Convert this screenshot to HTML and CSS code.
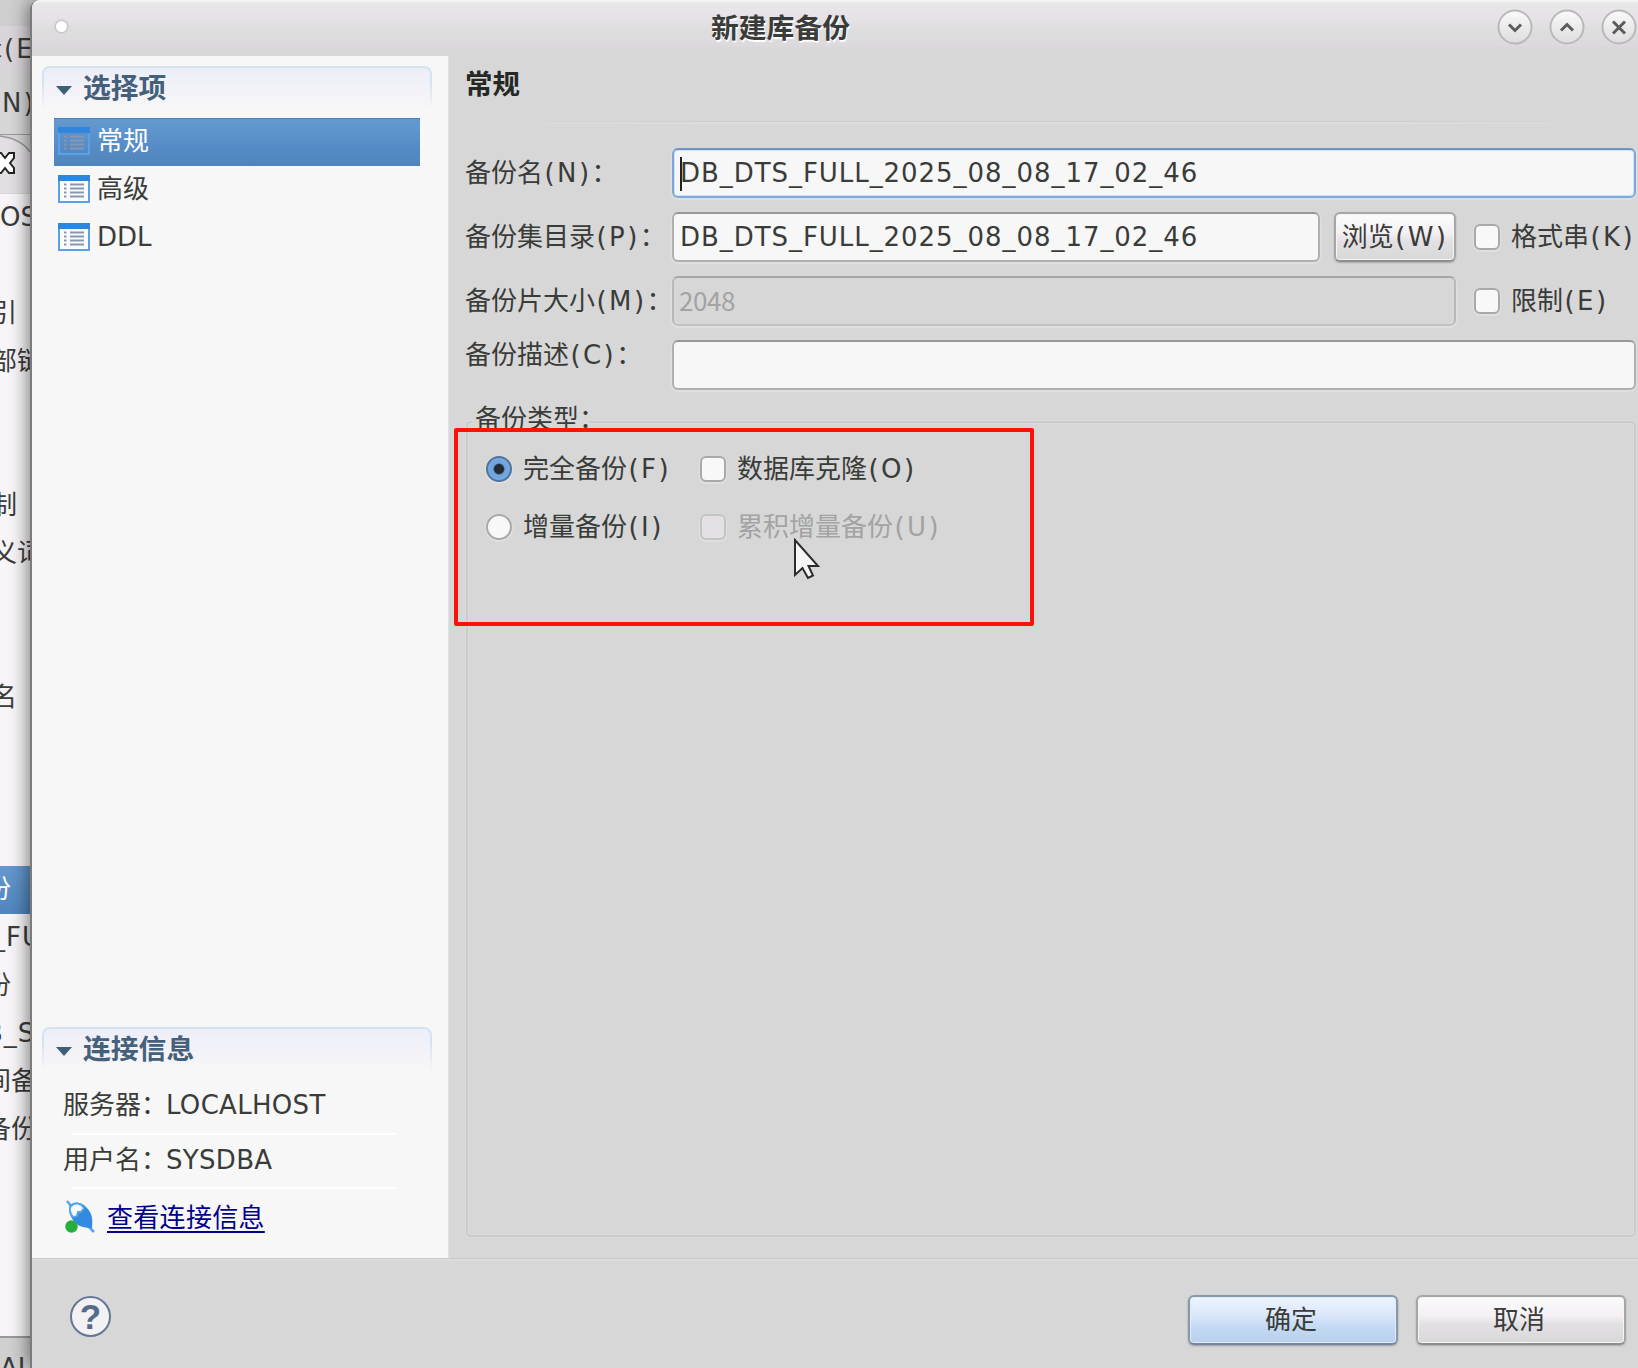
FILE: index.html
```html
<!DOCTYPE html>
<html lang="zh-CN">
<head>
<meta charset="utf-8">
<title>新建库备份</title>
<link rel="stylesheet" href="styles.css">
</head>
<body>
<div class="screen">
  <aside class="backdrop">
    <div class="bd-title"></div>
    <div class="bd-menu"><span class="m-edit">辑(E)</span></div>
    <div class="bd-tools"><span class="m-nav">N)</span></div>
    <div class="bd-tab">
      <svg width="30" height="58" viewBox="0 0 30 58"><path d="M0 1C14 3 24 8 30 17V58H0Z" fill="#e2dfe2"/><path d="M0 1C14 3 24 8 30 17" fill="none" stroke="#999" stroke-width="1.5"/><path d="M-4 18H1L5 23L9 18H14V23L10 28L14 33V38H9L5 33L1 38H-4" fill="#fff" stroke="#222" stroke-width="2"/></svg>
    </div>
    <div class="bd-list">
      <div class="bd-row"><span class="c0">OS</span></div>
      <div class="bd-row"></div>
      <div class="bd-row"><span class="c1">引</span></div>
      <div class="bd-row"><span class="c1">部链</span></div>
      <div class="bd-row"></div>
      <div class="bd-row"></div>
      <div class="bd-row"><span class="c1">制</span></div>
      <div class="bd-row"><span class="c1">义词</span></div>
      <div class="bd-row"></div>
      <div class="bd-row"></div>
      <div class="bd-row"><span class="c1">名</span></div>
      <div class="bd-row"></div>
      <div class="bd-row"></div>
      <div class="bd-row"></div>
      <div class="bd-row on"><span class="c2">份</span></div>
      <div class="bd-row"><span class="c3">_FU</span></div>
      <div class="bd-row"><span class="c2">份</span></div>
      <div class="bd-row"><span class="c4">B_S</span></div>
      <div class="bd-row"><span class="c2">间备</span></div>
      <div class="bd-row"><span class="c2">备份</span></div>
    </div>
    <div class="bd-status">AL</div>
  </aside>

  <main class="dialog">
    <header class="titlebar">
      <i class="dot"></i>
      <h1>新建库备份</h1>
      <div class="winbtns">
        <svg viewBox="0 0 36 36"><use href="#disc"/><path d="M12 15.5L18 21.5L24 15.5"/></svg>
        <svg viewBox="0 0 36 36"><use href="#disc"/><path d="M12 21.5L18 15.5L24 21.5"/></svg>
        <svg viewBox="0 0 36 36"><use href="#disc"/><path d="M12 12.5L24 24.5M24 12.5L12 24.5"/></svg>
      </div>
    </header>

    <div class="body">
      <nav class="sidebar">
        <h2 class="sec"><i class="tri"></i>选择项</h2>
        <ul class="items">
          <li class="on"><svg class="page" viewBox="0 0 32 28"><use href="#page"/></svg>常规</li>
          <li><svg class="page" viewBox="0 0 32 28"><rect width="32" height="28" fill="#fbfbfb"/><use href="#page"/></svg>高级</li>
          <li><svg class="page" viewBox="0 0 32 28"><rect width="32" height="28" fill="#fbfbfb"/><use href="#page"/></svg>DDL</li>
        </ul>
        <h2 class="sec conn"><i class="tri"></i>连接信息</h2>
        <div class="info"><span>服务器：</span><span class="host">LOCALHOST</span></div>
        <div class="info"><span>用户名：</span><span class="user">SYSDBA</span></div>
        <div class="link">
          <svg width="32" height="34" viewBox="0 0 32 34"><path d="M3 2L7 7M25 28L30 33" stroke="#55a5ee" stroke-width="2.5"/><path d="M6 6C12 1 19 4 23 9C28 14 29 20 28 29C19 29 13 27 9 21C5 15 4 10 6 6Z" fill="#328be0"/><path d="M7 7C11 3 17 4 20 9L17 13L14 13L13 17L9 18C6 14 5 10 7 7Z" fill="#f4faff" stroke="#55a5ee" stroke-width="1.8"/><circle cx="7.500" cy="27.500" r="6.200" fill="#27ae3b"/></svg>
          <a>查看连接信息</a>
        </div>
      </nav>

      <section class="content">
        <h3>常规</h3>
        <div class="rule"></div>
        <div class="row"><label>备份名<b>(N)</b>：</label><div class="field focus"><i class="caret"></i>DB_DTS_FULL_2025_08_08_17_02_46</div></div>
        <div class="row"><label>备份集目录<b>(P)</b>：</label><div class="field">DB_DTS_FULL_2025_08_08_17_02_46</div><button class="btn browse">浏览<b>(W)</b></button><div class="check"><i class="box"></i>格式串<b>(K)</b></div></div>
        <div class="row"><label>备份片大小<b>(M)</b>：</label><div class="field off">2048</div><div class="check"><i class="box"></i>限制<b>(E)</b></div></div>
        <div class="row desc"><label>备份描述<b>(C)</b>：</label><div class="field"></div></div>
        <div class="group">
          <span class="legend">备份类型：</span>
          <div class="opts">
            <div class="opt"><i class="radio sel"></i>完全备份<b>(F)</b></div><div class="opt"><i class="box"></i>数据库克隆<b>(O)</b></div>
            <div class="opt"><i class="radio"></i>增量备份<b>(I)</b></div><div class="opt dim"><i class="box"></i>累积增量备份<b>(U)</b></div>
          </div>
        </div>
      </section>
    </div>

    <footer class="footer">
      <span class="help">?</span>
      <button class="btn primary">确定</button>
      <button class="btn">取消</button>
    </footer>
  </main>

  <div class="marker"></div>
  <svg class="cursor" width="28" height="42" viewBox="0 0 28 42"><path d="M2 2V37L9.500 30L15 40L20 37.500L15.500 28H25Z" fill="#f6f6f6" stroke="#2c2c2c" stroke-width="2"/></svg>
</div>

<svg class="defs" width="0" height="0">
  <defs>
    <linearGradient id="g" x1="0" y1="0" x2="0" y2="1"><stop offset="0" stop-color="#fafafa"/><stop offset="1" stop-color="#dedcde"/></linearGradient>
    <g id="disc"><circle cx="18" cy="18" r="16.500" fill="url(#g)" stroke="#bab8ba" stroke-width="2"/></g>
    <g id="page"><path d="M0 0H32V28H0ZM2 6V26H30V6Z" fill="#5aa2e8" fill-rule="evenodd"/><rect width="32" height="6" fill="#2f86dc"/><path d="M6 9.500H8.500M6 13.500H8.500M6 17.500H8.500M6 21.500H8.500M12 9.500H26M12 13.500H26M12 17.500H26M12 21.500H26" stroke="#8796b2" stroke-width="2"/></g>
  </defs>
</svg>
</body>
</html>
```
FILE: styles.css
```css
* { box-sizing: border-box; }
body {
  margin: 0;
  font: 26px/48px "DejaVu Sans", "Noto Sans CJK SC", sans-serif;
  color: #3a3c3a;
}
b { font-weight: 400; letter-spacing: 2.4px; margin-left: 1.500px; }
i { display: block; flex: none; }
h1, h2, h3, ul { margin: 0; padding: 0; list-style: none; }
.screen { position: relative; width: 1638px; height: 1368px; overflow: hidden; display: flex; background: #d7d7d7; }
.defs { position: absolute; }

/* window behind the dialog */
.backdrop { width: 30px; flex: none; overflow: hidden; white-space: nowrap; display: flex; flex-direction: column; background: #f7f5f7; }
.backdrop span { display: block; }
.bd-title { height: 26px; background: #cfcfcf; }
.bd-menu { height: 46px; background: #dad5da; line-height: 46px; }
.bd-tools { height: 63px; background: #d7d7d7; line-height: 62px; border-bottom: 1px solid #999; }
.bd-tab { height: 59px; background: #d7d7d7; }
.bd-tab svg { display: block; }
.bd-list { height: 1144px; border-bottom: 2px solid #999; line-height: 46px; }
.bd-row { height: 48px; }
.bd-row.on { background: linear-gradient(#6498ce, #5085bd); color: #fff; }
.m-edit { margin-left: -24px; letter-spacing: 2px; }
.m-nav { margin-left: 2px; letter-spacing: 2px; }
.c0 { margin-left: 0; }
.c1 { margin-left: -9px; }
.c2 { margin-left: -15px; }
.c3 { margin-left: -8px; letter-spacing: 1px; }
.c4 { margin-left: -15px; letter-spacing: 1px; }
.bd-status { height: 30px; flex: none; background: #d0d0d0; line-height: 60px; }

.dialog {
  flex: 1; min-width: 0; position: relative; display: flex; flex-direction: column;
  border-left: 2px solid #7b7b7b; border-top-left-radius: 9px;
  background: #d7d7d7; box-shadow: 0 0 20px rgba(0, 0, 0, .6);
}
.titlebar {
  height: 56px; flex: none; display: flex; align-items: center; padding: 0 1px 5px 24px; position: relative;
  border-top: 2px solid #f4f4f4; border-top-left-radius: 8px;
  background: linear-gradient(#e8e8e8, #e6e2e6 30%, #dedede 50%, #ddd9dd 80%, #d7d7d7 86%);
}
.dot { width: 11px; height: 11px; border-radius: 50%; background: #fff; box-shadow: 0 0 2px 1px #bbb5bb; }
.titlebar h1 { margin: 4px 0 0 644px; font-size: 27.8px; line-height: 50px; color: #3a3c3a; text-shadow: 1px 2px 1px #fff; }
.winbtns { margin-left: auto; display: flex; gap: 16px; }
.winbtns svg { width: 36px; height: 36px; fill: none; stroke: #5c5c5c; stroke-width: 3; }

.body { height: 1202px; flex: none; display: flex; }
.sidebar { width: 417px; padding: 10px 16px 0 10px; background: #f7f7f7; border-right: 1px solid #e2e2e2; }
.sec {
  height: 44px; display: flex; align-items: center; gap: 11px; padding: 0 0 0 12px;
  border: 2px solid transparent; border-bottom: 0; border-radius: 8px 8px 0 0;
  background: linear-gradient(#eceef8, #f4f3f8 65%, #f7f7f7) padding-box, linear-gradient(#d7e2f1 40%, #f7f7f7) border-box;
  font-size: 27.8px; line-height: 40px; color: #44607a;
}
.tri { border: 8px solid transparent; border-top: 9px solid #3f5f78; border-bottom: 0; margin-top: 2px; }
.items { margin: 8px 12px 765px 12px; }
.items li { height: 48px; display: flex; align-items: center; padding: 0 0 3px 4px; gap: 7px; }
.items li.on { background: linear-gradient(#6499d0, #568bc6 60%, #5084bc); color: #fff; border-top: 1px solid #4c7fb6; }
.page { width: 32px; height: 28px; }
.items .on .page { margin-top: -1px; }
.info { height: 54px; margin: 0 0 0 21px; display: flex; line-height: 50px; background: linear-gradient(#fff, #fff) 10px 100% / 324px 2px no-repeat; }
.conn + .info { height: 64px; line-height: 69px; }
.host, .user { margin-left: -1px; letter-spacing: .3px; }
.link { display: flex; align-items: center; gap: 11px; margin: 6px 0 0 22px; height: 46px; }
.link svg { margin-top: -5px; }
.link a { color: #00008b; text-decoration: underline; text-decoration-thickness: 2px; text-underline-offset: 4px; letter-spacing: .3px; }

.content { flex: 1; min-width: 0; padding: 6px 2px 0 16px; display: flex; flex-direction: column; }
.content h3 { font-size: 27.5px; line-height: 44px; color: #262826; }
.rule { height: 3px; margin: 15px 0 24px; background: linear-gradient(90deg, #d7d7d7, transparent 20% 80%, #d7d7d7), linear-gradient(#d0cdd0 1px, #dddbdd 1px); }
.row { height: 50px; margin-bottom: 14px; display: flex; }
.row label { width: 207px; flex: none; white-space: nowrap; line-height: 50px; }
.field {
  flex: 1; display: flex; position: relative; padding-left: 6px; line-height: 46px; letter-spacing: .95px;
  background: #f7f7f7; border: 2px solid #b0b0b2; border-top-color: #989898; border-radius: 6px;
  box-shadow: 0 1px 1px 1px #e0e0e0;
}
.focus { border-color: #6c95c0 #7ba8d8 #80aadb; box-shadow: inset 0 0 0 1px #cfe2f8, 0 1px 1px 1px #e0e0e0; }
.caret { position: absolute; left: 6px; top: 7px; width: 2px; height: 34px; background: #222; }
.off { background: #d7d7d7; color: #a3a3a3; border-color: #a5a5a5 #b8b8b8 #c2c2c2; padding-left: 5px; line-height: 43px; font-family: "Noto Sans CJK SC", sans-serif; letter-spacing: -.4px; }
.btn {
  height: 50px; padding: 0; font: inherit; line-height: 46px; color: #3a3c3a; letter-spacing: 0;
  border: 2px solid #a6a6a6; border-bottom-color: #8e8e8e; border-radius: 6px;
  background: linear-gradient(#fcfcfc, #f4f0f4 40%, #e3e0e3 60%, #d8d8d8);
  box-shadow: 0 1px 2px #aaa, inset 0 0 0 1px #f5f5f5;
}
.browse { width: 122px; margin-left: 14px; white-space: nowrap; }
.check { width: 162px; margin-left: 18px; display: flex; align-items: center; white-space: nowrap; }
.box { width: 26px; height: 26px; margin-right: 11px; border: 2px solid #a9a9a9; border-radius: 6px; background: #f8f8f8; box-shadow: 0 1px 1px 1px #e0e0e0; }
.desc label { line-height: 30px; }
.group { margin: 17px 0 0 1px; height: 816px; position: relative; border: 2px solid #cbcbcb; border-radius: 5px; box-shadow: 0 0 0 1px #dcdcdc, inset 0 0 0 1px #dcdcdc; }
.legend { position: absolute; left: 4px; top: -28px; height: 48px; padding: 0 0 0 3px; width: 118px; overflow: hidden; white-space: nowrap; background: #d7d7d7; }
.opts { display: grid; grid-template-columns: 214px 300px; grid-auto-rows: 58px; padding: 17px 0 0 18px; }
.opt { display: flex; align-items: center; white-space: nowrap; }
.radio { width: 26px; height: 26px; border-radius: 50%; margin-right: 11px; border: 2px solid #a9a9a9; background: #f8f8f8; box-shadow: 0 1px 1px 1px #e0e0e0; }
.sel { border-color: #50749f; background: radial-gradient(circle, #222b33 0 4.500px, #6fa3dc 6px, #7eb0e4); }
.dim { color: #a3a3a3; }
.dim .box { background: #e4e0e4; border-color: #c3c3c3; }

.footer { flex: 1; display: flex; align-items: center; gap: 18px; padding: 12px 12px 0 38px; border-top: 1px solid #ccc; box-shadow: inset 0 2px #dcdadc; }
.footer .btn { width: 210px; padding-right: 4px; }
.help { width: 41px; height: 41px; border: 2px solid #647796; border-radius: 50%; margin: -6px auto 0 0; background: #f2f1f3; color: #566b8c; font: 700 35px/37px "Liberation Sans", sans-serif; text-align: center; }
.footer .primary { border-color: #8898ab; border-bottom-color: #76879b; background: linear-gradient(#edf4ff, #dae7f9 40%, #c4d9f3 65%, #b7d0ed); box-shadow: 0 1px 2px #999, inset 0 0 0 1px #dfecfc; }

/* annotation and pointer drawn over the dialog */
.marker { position: absolute; left: 454px; top: 428px; width: 580px; height: 198px; border: 4px solid #ff1205; border-radius: 2px; }
.cursor { position: absolute; left: 793px; top: 538px; }
```
